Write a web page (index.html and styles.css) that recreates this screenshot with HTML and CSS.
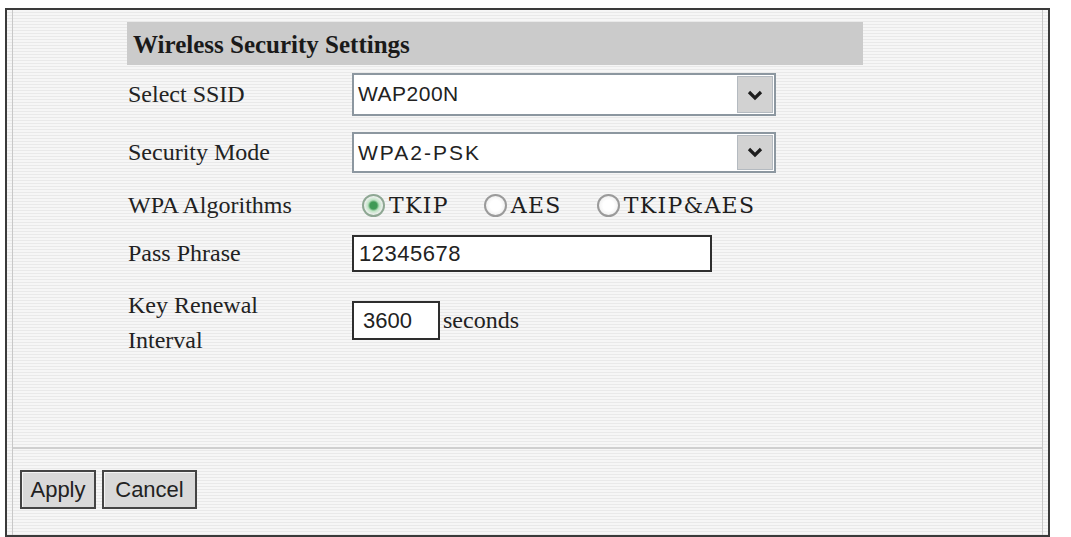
FILE: index.html
```html
<!DOCTYPE html>
<html lang="en">
<head>
    <meta charset="UTF-8">
    <meta name="viewport" content="width=device-width, initial-scale=1.0">
    <title>Wireless Security Settings</title>
    <link rel="stylesheet" href="styles.css">
</head>
<body>
    <div class="frame">
        <div class="inner">
            <div class="settings">
                <div class="section-title">Wireless Security Settings</div>

                <div class="row row-ssid">
                    <div class="label">Select SSID</div>
                    <div class="select select-wide">
                        <span class="select-text">WAP200N</span>
                        <span class="select-arrow">
                            <svg width="16" height="12" viewBox="0 0 16 12"><path d="M2 3 L8 9 L14 3" fill="none" stroke="#1e1e1e" stroke-width="3.2"/></svg>
                        </span>
                    </div>
                </div>

                <div class="row row-mode">
                    <div class="label">Security Mode</div>
                    <div class="select select-wide">
                        <span class="select-text spaced">WPA2-PSK</span>
                        <span class="select-arrow">
                            <svg width="16" height="12" viewBox="0 0 16 12"><path d="M2 3 L8 9 L14 3" fill="none" stroke="#1e1e1e" stroke-width="3.2"/></svg>
                        </span>
                    </div>
                </div>

                <div class="row row-algo">
                    <div class="label">WPA Algorithms</div>
                    <div class="radios">
                        <label class="radio checked"><span class="dot"></span>TKIP</label>
                        <label class="radio"><span class="dot"></span>AES</label>
                        <label class="radio"><span class="dot"></span>TKIP&amp;AES</label>
                    </div>
                </div>

                <div class="row row-pass">
                    <div class="label">Pass Phrase</div>
                    <div class="textbox textbox-pass">12345678</div>
                </div>

                <div class="row row-renew">
                    <div class="label label-two">Key Renewal<br>Interval</div>
                    <div class="renew">
                        <div class="textbox textbox-short">3600</div>
                        <span class="unit">seconds</span>
                    </div>
                </div>
            </div>

            <div class="separator"></div>

            <div class="buttons">
                <button class="btn btn-apply">Apply</button>
                <button class="btn btn-cancel">Cancel</button>
            </div>
        </div>
    </div>
</body>
</html>
```

FILE: styles.css
```css
body {
    margin: 0;
    padding: 0;
    background-color: #ffffff;
    font-family: 'Liberation Serif', 'Times New Roman', serif;
    color: #222222;
}
.frame {
    margin: 8px 21px 0 5px;
    height: 525px;
    border: 2px solid #3a3a3a;
    background: repeating-linear-gradient(to bottom, #f6f6f6 0, #f6f6f6 2px, #e9e9e9 2px, #e9e9e9 3px);
}
.inner {
    height: 100%;
    margin: 0 5px;
    border-left: 1px solid #c8c8c8;
    border-right: 1px solid #c8c8c8;
    display: flex;
    flex-direction: column;
}
.settings {
    height: 437px;
    padding: 12px 0 0 114px;
    box-sizing: border-box;
}
.section-title {
    width: 730px;
    height: 43px;
    background-color: #cbcbcb;
    font-weight: bold;
    font-size: 25px;
    line-height: 45px;
    padding-left: 6px;
    color: #1a1a1a;
}
.row {
    display: flex;
    align-items: center;
}
.row-ssid { height: 59px; }
.row-mode { height: 56px; }
.row-algo { height: 50px; }
.row-pass { height: 46px; }
.row-renew { height: 89px; }
.label {
    width: 224px;
    font-size: 24px;
    padding-left: 1px;
}
.label-two {
    line-height: 35px;
    padding-top: 4px;
}
.select {
    display: flex;
    align-items: stretch;
    background-color: #ffffff;
    border: 2px solid #8c97a0;
    box-sizing: border-box;
}
.select-wide {
    width: 424px;
    height: 43px;
}
.row-mode .select-wide {
    height: 41px;
}
.select-text {
    flex: 1;
    font-family: 'Liberation Sans', Arial, sans-serif;
    font-size: 21px;
    line-height: 38px;
    padding-left: 4px;
    letter-spacing: 0.5px;
}
.select-text.spaced {
    letter-spacing: 2px;
}
.select-arrow {
    width: 34px;
    margin: 1px;
    background-color: #d2d2d2;
    border: 1px solid #b4bac0;
    display: flex;
    align-items: center;
    justify-content: center;
}
.radios {
    display: flex;
    padding-left: 10px;
}
.radio {
    display: flex;
    align-items: center;
    font-family: 'DejaVu Serif', serif;
    font-size: 22px;
    letter-spacing: 1.3px;
    margin-right: 35px;
    color: #1e1e1e;
}
.radio .dot {
    width: 23px;
    height: 23px;
    border: 2px solid #9a9a9a;
    border-radius: 50%;
    background: radial-gradient(circle, #ffffff 40%, #e4e4e4 100%);
    margin-right: 4px;
    box-sizing: border-box;
}
.radio.checked .dot {
    background: radial-gradient(circle, #3f9a55 0, #3f9a55 26%, #bfe3c4 42%, #f2f2f2 70%);
    border-color: #8ea793;
}
.textbox {
    background-color: #ffffff;
    border: 2px solid #2e2e2e;
    box-sizing: border-box;
    font-family: 'Liberation Sans', Arial, sans-serif;
    font-size: 22px;
    padding-left: 5px;
}
.textbox-pass {
    width: 360px;
    height: 37px;
    line-height: 33px;
    letter-spacing: 0.5px;
}
.renew {
    display: flex;
    align-items: center;
}
.textbox-short {
    width: 88px;
    height: 39px;
    line-height: 35px;
    padding-left: 9px;
}
.unit {
    font-size: 24px;
    margin-left: 3px;
}
.separator {
    height: 2px;
    background-color: #cfcfcf;
}
.buttons {
    display: flex;
    gap: 6px;
    padding: 21px 0 0 7px;
}
.btn {
    font-family: 'Liberation Sans', Arial, sans-serif;
    font-size: 22px;
    color: #222222;
    background-color: #d9d9d9;
    border: 2px solid #444444;
    box-shadow: inset 1px 1px 0 #f4f4f4;
    height: 39px;
    padding: 0 6px;
    margin: 0;
}
.btn-apply { width: 76px; }
.btn-cancel { width: 95px; }
```
